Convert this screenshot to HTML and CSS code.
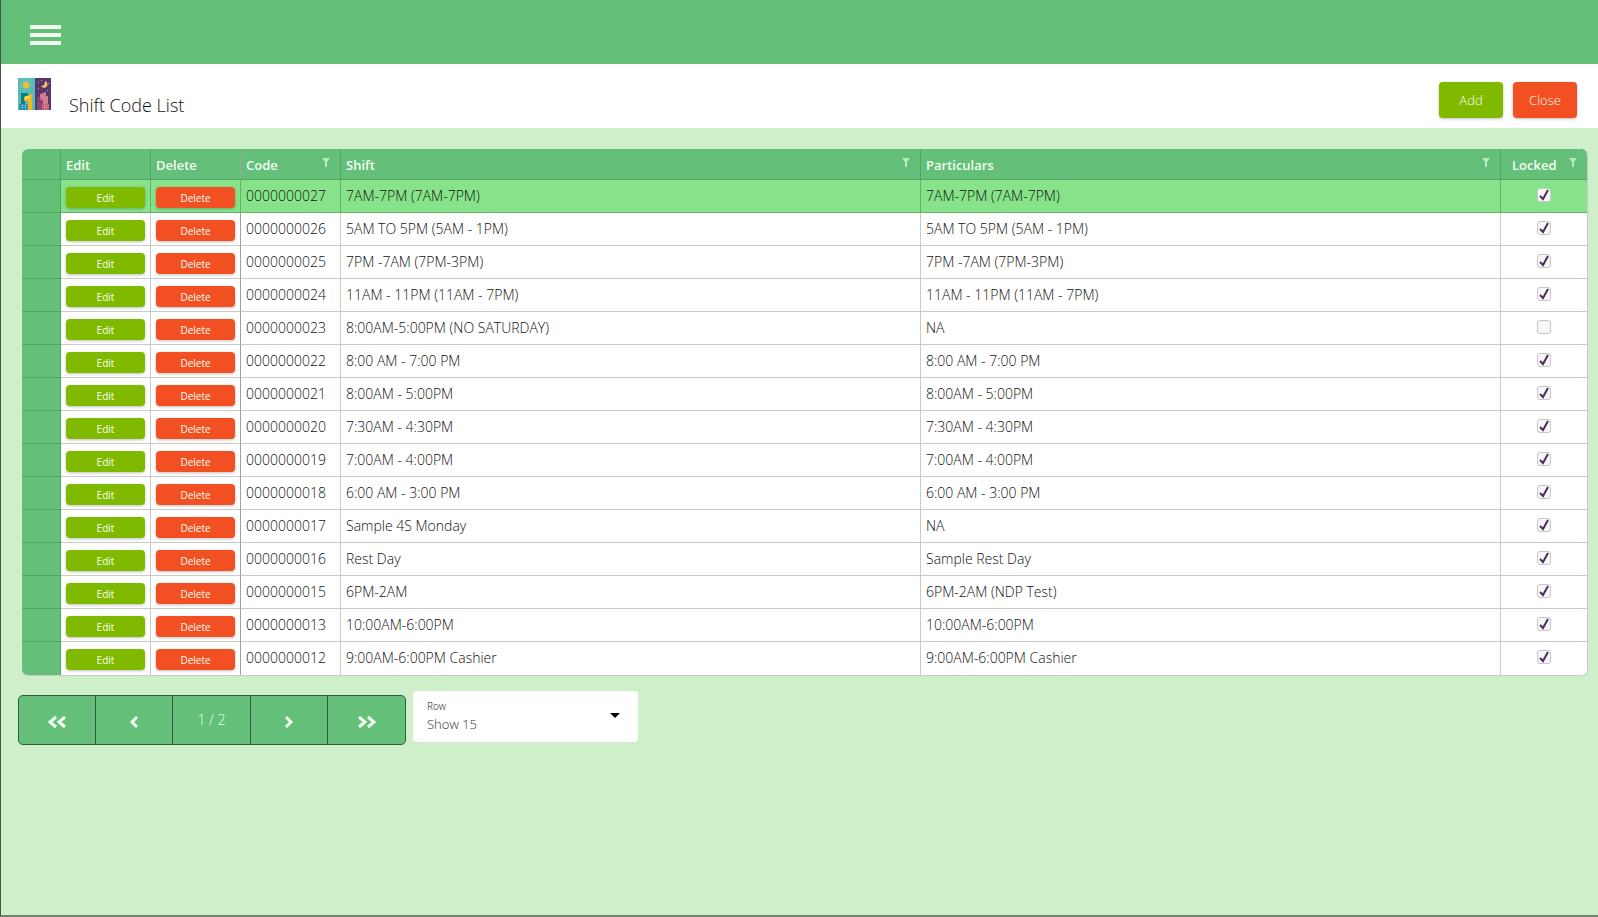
FILE: index.html
```html
<!DOCTYPE html>
<html lang="en">
<head>
<meta charset="utf-8">
<title>Shift Code List</title>
<link rel="stylesheet" href="styles.css">
</head>
<body>
<header class="topbar">
  <button class="menu" type="button" aria-label="Menu"><svg width="31" height="20" viewBox="0 0 31 20"><path d="M0 0h31v4H0zM0 8h31v4H0zM0 16h31v4H0z" fill="#f3fff3"/></svg></button>
</header>
<section class="titlebar">
  <svg class="logo" width="33" height="32" viewBox="0 0 33 32">
    <path fill="#58bcbb" d="M0 0h17v32H0z"/><path fill="#58366b" d="M17 0h16v32H17z"/>
    <circle cx="8" cy="7" r="5" fill="none" stroke="#d7c863" stroke-width="1" stroke-dasharray="1 2"/>
    <circle cx="8" cy="7" r="3.2" fill="#eec22f"/>
    <path fill="#f4bf63" d="M27 3a3.5 3.5 0 1 1-4 5q4 0 4-5z"/>
    <path fill="#c9a1b9" d="M20 4h1v1h-1zM23 2h1v1h-1zM30 5h1v1h-1zM20 10h1v1h-1zM29 12h1v1h-1z"/>
    <path fill="#087f8b" d="M3 15h7v3H7v14H3z"/><path fill="#f6b51d" d="M6 19l8-3v16h-4v-9H6z"/><path fill="#ffd34b" d="M7 18h5v3H7z"/>
    <path fill="#2e91b5" d="M1 26h9v6H1z"/><path fill="#a8dcdf" d="M4 27h1v1H4zM7 27h1v1H7zM4 29h1v1H4zM7 29h1v1H7z"/>
    <path fill="#8c4779" d="M19 19h6v13h-6z"/><path fill="#d27c92" d="M22 16l6-2v4h2v9h-5v-5h-3z"/>
    <path fill="#6d3b70" d="M19 20h4v1h-4zM19 23h5v1h-5z"/>
    <path fill="#c6627d" d="M24 26h7v6h-7z"/><path fill="#e4a1a8" d="M26 27h1v1h-1zM28 27h1v1h-1zM26 29h1v1h-1zM28 29h1v1h-1z"/>
  </svg>
  <h1>Shift Code List</h1>
  <div class="actions">
    <button class="btn green" type="button">Add</button>
    <button class="btn red" type="button">Close</button>
  </div>
</section>
<main>
  <table class="grid">
    <colgroup><col class="c-head"><col class="c-btn"><col class="c-btn"><col class="c-code"><col><col><col class="c-lock"></colgroup>
    <thead><tr><th></th><th>Edit</th><th>Delete</th>
      <th><div class="th">Code<svg class="filter" viewBox="0 0 8 9"><path d="M0 0h8L5 4v5H3V4z"/></svg></div></th>
      <th><div class="th">Shift<svg class="filter" viewBox="0 0 8 9"><path d="M0 0h8L5 4v5H3V4z"/></svg></div></th>
      <th><div class="th">Particulars<svg class="filter" viewBox="0 0 8 9"><path d="M0 0h8L5 4v5H3V4z"/></svg></div></th>
      <th><div class="th locked">Locked<svg class="filter" viewBox="0 0 8 9"><path d="M0 0h8L5 4v5H3V4z"/></svg></div></th></tr></thead>
    <tbody id="rows"></tbody>
  </table>
  <div class="footer">
    <nav class="pager" aria-label="Pages">
      <button type="button" aria-label="First"><svg width="18" height="12" viewBox="0 0 18 12"><path d="M8 1L2 6l6 5M17 1l-6 5 6 5"/></svg></button>
      <button type="button" aria-label="Previous"><svg width="8" height="12" viewBox="0 0 8 12"><path d="M7 1L2 6l5 5"/></svg></button>
      <span class="page">1 / 2</span>
      <button type="button" aria-label="Next"><svg width="8" height="12" viewBox="0 0 8 12"><path d="M1 1l5 5-5 5"/></svg></button>
      <button type="button" aria-label="Last"><svg width="18" height="12" viewBox="0 0 18 12"><path d="M1 1l6 5-6 5M10 1l6 5-6 5"/></svg></button>
    </nav>
    <div class="field">
      <label for="row-count">Row</label>
      <select id="row-count"><option>Show 15</option></select>
      <svg class="arrow" width="10" height="5" viewBox="0 0 10 5"><path d="M0 0h10L5 5z"/></svg>
    </div>
  </div>
</main>
<script src="rows.js"></script>
</body>
</html>
```

FILE: styles.css
```css
* { box-sizing: border-box; }
body {
  margin: 0;
  min-height: 100vh;
  display: flex;
  flex-direction: column;
  background: #ceefca;
  border-left: 1px solid #3f5a42;
  border-bottom: 2px solid #737f72;
  font: 300 14px/20px "Open Sans", "Noto Sans", sans-serif;
  color: #111;
}
button { font: inherit; border: 0; padding: 0; cursor: pointer; }
.topbar { background: #64c078; height: 64px; display: flex; padding: 5px 29px 0; }
.menu { background: none; display: flex; align-items: center; }
.titlebar { background: #fff; height: 64px; display: flex; align-items: flex-start; padding: 14px 21px 0 17px; }
.titlebar h1 { margin: 13px 0 0 18px; font-size: 18px; line-height: 28px; font-weight: 300; }
.actions { margin: 4px 0 0 auto; display: flex; gap: 10px; }
.btn { width: 64px; height: 36px; border-radius: 4px; color: #f9fff0; box-shadow: 0 1px 3px rgba(0, 0, 0, .25); font-size: 13px; }
.green { background: #7fba00; }
.red { background: #f25022; }
main { padding: 21px 10px 0 17px; }
.grid {
  width: calc(100% - 4px);
  margin-left: 4px;
  table-layout: fixed;
  border-collapse: separate;
  border-spacing: 0;
  border: 1px solid #c6cbc6;
  border-width: 0 1px 1px 0;
  border-radius: 6px;
  overflow: hidden;
  background: #fff;
}
.c-head { width: 39px; }
.c-btn { width: 90px; }
.c-code { width: 100px; }
.c-lock { width: 86px; }
.grid th { height: 31px; padding: 1px 5px 0; background: #64c078; color: #f3fff3; border: solid #4fa564; border-width: 0 1px 1px 0; text-align: left; font-size: 13px; font-weight: 600; }
.grid td { height: 33px; padding: 6px 5px 0; border: solid #c6cbc6; border-width: 0 1px 1px 0; vertical-align: top; white-space: nowrap; }
.grid th:last-child, .grid td:last-child { border-right: 0; }
.grid tbody tr:last-child td { border-bottom: 0; }
.grid td:first-child { background: #64c078; border-color: #4fa564; }
.grid td:nth-child(3), .grid th:nth-child(3) { border-right-color: #9aa59b; }
.grid .selected td { background: #86e389; border-color: #64b06c; }
.grid .selected td:first-child { background: #64c078; border-color: #4fa564; }
.th { display: flex; justify-content: space-between; align-items: flex-start; }
.locked { padding-left: 6px; }
.filter { width: 8px; height: 9px; margin: 3px 5px 0 0; fill: #b7e8bf; }
.grid .act { padding-top: 7px; }
.act .btn { display: block; width: 100%; height: 21px; font-size: 10px; line-height: 20px; font-weight: 400; }
.grid .lock { text-align: center; padding-top: 8px; }
.lock label { display: inline-flex; position: relative; vertical-align: top; }
.lock input { appearance: none; width: 14px; height: 14px; margin: 0; border: 1px solid #c8c6c8; border-radius: 3px; background: #f7f7f7; }
.lock svg { position: absolute; inset: 0; fill: none; stroke: #4b2e5e; stroke-width: 2; }
.footer { display: flex; align-items: flex-start; gap: 7px; padding-top: 15px; }
.pager { display: flex; height: 50px; margin-top: 4px; border: 1px solid #2f5c3b; border-radius: 5px; overflow: hidden; background: #64c078; }
.pager > * { width: 77px; border-right: 1px solid #2f5c3b; display: flex; align-items: center; justify-content: center; background: none; color: #e9ffe9; }
.pager > :last-child { border-right: 0; }
.pager .page { width: 78px; }
.pager button { padding-top: 4px; }
.pager svg { fill: none; stroke: #f3fff3; stroke-width: 3; overflow: visible; }
.field { position: relative; width: 225px; height: 51px; background: #fff; border-radius: 4px; }
.field label { position: absolute; left: 14px; top: 7px; font-size: 10px; line-height: 16px; }
.field select { appearance: none; width: 100%; height: 100%; border: 0; border-radius: 4px; background: none; padding: 15px 14px 0; font: inherit; font-size: 13px; color: #333; }
.arrow { position: absolute; right: 18px; top: 22px; pointer-events: none; }
```

FILE: rows.js
```js
const rows = [
  ["0000000027", "7AM-7PM (7AM-7PM)", "7AM-7PM (7AM-7PM)", true],
  ["0000000026", "5AM TO 5PM (5AM - 1PM)", "5AM TO 5PM (5AM - 1PM)", true],
  ["0000000025", "7PM -7AM (7PM-3PM)", "7PM -7AM (7PM-3PM)", true],
  ["0000000024", "11AM - 11PM (11AM - 7PM)", "11AM - 11PM (11AM - 7PM)", true],
  ["0000000023", "8:00AM-5:00PM (NO SATURDAY)", "NA", false],
  ["0000000022", "8:00 AM - 7:00 PM", "8:00 AM - 7:00 PM", true],
  ["0000000021", "8:00AM - 5:00PM", "8:00AM - 5:00PM", true],
  ["0000000020", "7:30AM - 4:30PM", "7:30AM - 4:30PM", true],
  ["0000000019", "7:00AM - 4:00PM", "7:00AM - 4:00PM", true],
  ["0000000018", "6:00 AM - 3:00 PM", "6:00 AM - 3:00 PM", true],
  ["0000000017", "Sample 4S Monday", "NA", true],
  ["0000000016", "Rest Day", "Sample Rest Day", true],
  ["0000000015", "6PM-2AM", "6PM-2AM (NDP Test)", true],
  ["0000000013", "10:00AM-6:00PM", "10:00AM-6:00PM", true],
  ["0000000012", "9:00AM-6:00PM Cashier", "9:00AM-6:00PM Cashier", true]
];
const tick = '<svg width="14" height="14" viewBox="0 0 14 14"><path d="M3 8l3 3 5-9"/></svg>';
document.getElementById("rows").innerHTML = rows.map(([code, shift, particulars, locked], i) => `
  <tr${i === 0 ? ' class="selected"' : ""}>
    <td></td>
    <td class="act"><button class="btn green" type="button">Edit</button></td>
    <td class="act"><button class="btn red" type="button">Delete</button></td>
    <td>${code}</td><td>${shift}</td><td>${particulars}</td>
    <td class="lock"><label><input type="checkbox" aria-label="Locked ${code}"${locked ? " checked" : ""}>${locked ? tick : ""}</label></td>
  </tr>`).join("");
```
